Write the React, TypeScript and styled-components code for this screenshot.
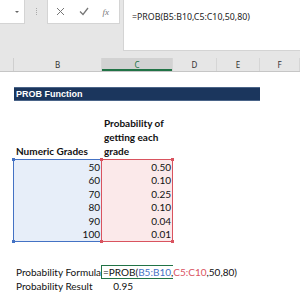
import React from "react";
import styled, { createGlobalStyle } from "styled-components";

const Global = createGlobalStyle`
  html, body { margin: 0; padding: 0; background: #fff; }
  body { width: 300px; height: 300px; overflow: hidden; }
`;

const Page = styled.div`
  width: 300px;
  height: 300px;
  overflow: hidden;
  background: #fff;
  font-family: Lato, "Liberation Sans", sans-serif;
`;

const Ribbon = styled.div`
  background: #e6e6e6;
  height: 58px;
  display: flex;
  align-items: flex-start;
`;

const NameBox = styled.div`
  width: 25px;
  height: 24px;
  background: #fff;
  border-right: 1px solid #d4d4d4;
  border-bottom: 1px solid #d4d4d4;
  box-sizing: border-box;
  display: flex;
  align-items: center;
  justify-content: flex-end;
  padding-right: 5px;
`;

const Arrow = styled.div`
  width: 0;
  height: 0;
  border-left: 2px solid transparent;
  border-right: 2px solid transparent;
  border-top: 2px solid #666;
`;

const Grip = styled.div`
  width: 22px;
  height: 24px;
  display: flex;
  align-items: center;
  justify-content: center;
  &::before {
    content: "";
    width: 1px;
    height: 8px;
    background-image: linear-gradient(#aaa 50%, transparent 50%);
    background-size: 1px 2px;
  }
`;

const FxBox = styled.div`
  width: 73px;
  height: 24px;
  background: #fff;
  border: 1px solid #d4d4d4;
  border-top: none;
  box-sizing: border-box;
  display: flex;
  align-items: center;
  justify-content: space-between;
  padding: 0 10px 0 8px;
`;

const Fx = styled.span`
  font-family: "Liberation Serif", serif;
  font-style: italic;
  font-size: 9px;
  color: #777;
`;

const FormulaBox = styled.div`
  margin-left: 3px;
  flex: 1;
  height: 51px;
  background: #fff;
  border-left: 1px solid #d4d4d4;
  border-bottom: 1px solid #d4d4d4;
  box-sizing: border-box;
  padding: 11px 0 0 8px;
  font-family: "Noto Sans", sans-serif;
  font-size: 8.8px;
  color: #222;
  white-space: nowrap;
`;

const Headers = styled.div`
  display: grid;
  grid-template-columns: 14px 88px 71px 44px 43px 40px;
  height: 13px;
  background: #e6e6e6;
  border-bottom: 1px solid #c6c6c6;
  box-sizing: content-box;
`;

const ColHead = styled.div<{ $active?: boolean; $corner?: boolean }>`
  display: flex;
  align-items: center;
  justify-content: center;
  font-family: "Noto Sans", sans-serif;
  font-size: 8px;
  color: ${(p) => (p.$active ? "#217346" : "#333")};
  background: ${(p) => (p.$active ? "#d2d2d2" : "#e6e6e6")};
  border-right: ${(p) => (p.$corner ? "1px solid #cfcfcf" : "1px solid #d6d6d6")};
  box-shadow: ${(p) => (p.$active ? "inset 0 -2px 0 #217346" : "none")};
  box-sizing: border-box;
`;

const Sheet = styled.div`
  display: grid;
  grid-template-columns: 14px 88px 71px 44px 43px 40px;
  grid-template-rows: 15px 14px 15px 43px 14px 14px 14px 14px 14px 13px 23px 14px 14px;
  font-size: 10px;
  color: #111;
`;

const Title = styled.div`
  grid-column: 2 / 6;
  grid-row: 2;
  background: #1b365d;
  border-top: 1px solid #4a6488;
  border-bottom: 1px solid #4a6488;
  box-sizing: border-box;
  color: #fff;
  font-family: "Liberation Sans", Arial, sans-serif;
  font-weight: bold;
  font-size: 9px;
  display: flex;
  align-items: center;
  padding-left: 2px;
`;

const HeadCell = styled.div<{ $col: number }>`
  grid-column: ${(p) => p.$col};
  grid-row: 4;
  font-weight: bold;
  font-size: 10px;
  line-height: 14px;
  display: flex;
  align-items: flex-end;
  padding: 0 2px 1px;
`;

const Range = styled.div<{ $col: number; $bg: string; $line: string }>`
  grid-column: ${(p) => p.$col};
  grid-row: 5 / 11;
  position: relative;
  background: ${(p) => p.$bg};
  border: 1px solid ${(p) => p.$line};
  margin-left: -1px;
  display: grid;
  grid-template-rows: repeat(6, 1fr);
  box-sizing: border-box;
`;

const Handle = styled.span<{ $c: string; $x: "l" | "r"; $y: "t" | "b" }>`
  position: absolute;
  width: 3px;
  height: 3px;
  background: ${(p) => p.$c};
  ${(p) => (p.$x === "l" ? "left: -2px;" : "right: -2px;")}
  ${(p) => (p.$y === "t" ? "top: -2px;" : "bottom: -2px;")}
`;

const Num = styled.div`
  display: flex;
  align-items: center;
  justify-content: flex-end;
  padding-right: 1px;
  font-size: 10px;
`;

const Label = styled.div<{ $row: number }>`
  grid-column: 2;
  grid-row: ${(p) => p.$row};
  display: flex;
  align-items: center;
  padding-left: 2px;
  white-space: nowrap;
  font-size: 10px;
`;

const EditCell = styled.div`
  grid-column: 3;
  grid-row: 12;
  position: relative;
  border: 1px solid #217346;
  border-right: none;
  margin-left: -1px;
  box-sizing: border-box;
  display: flex;
  align-items: center;
  padding-left: 1px;
  white-space: nowrap;
  overflow: visible;
  font-size: 10px;
  z-index: 1;
`;

const Ref = styled.span<{ $c: string }>`
  color: ${(p) => p.$c};
`;

const Caret = styled.span`
  display: inline-block;
  width: 1px;
  height: 11px;
  background: #000;
  margin-left: 1px;
`;

const Result = styled.div`
  grid-column: 3;
  grid-row: 13;
  display: flex;
  align-items: center;
  justify-content: flex-end;
  padding-right: 40px;
  font-size: 10px;
`;

const grades = [50, 60, 70, 80, 90, 100];
const probs = ["0.50", "0.10", "0.25", "0.10", "0.04", "0.01"];

export default function App() {
  return (
    <Page>
      <Global />
      <Ribbon>
        <NameBox>
          <Arrow />
        </NameBox>
        <Grip />
        <FxBox>
          <svg width="9" height="9" viewBox="0 0 9 9">
            <path d="M1 1L8 8M8 1L1 8" stroke="#777" strokeWidth="1" fill="none" />
          </svg>
          <svg width="10" height="9" viewBox="0 0 10 9">
            <path d="M1 4.5L4 7.5L9 1" stroke="#777" strokeWidth="1.3" fill="none" />
          </svg>
          <Fx>fx</Fx>
        </FxBox>
        <FormulaBox>=PROB(B5:B10,C5:C10,50,80)</FormulaBox>
      </Ribbon>
      <Headers>
        <ColHead $corner />
        <ColHead>B</ColHead>
        <ColHead $active>C</ColHead>
        <ColHead>D</ColHead>
        <ColHead>E</ColHead>
        <ColHead>F</ColHead>
      </Headers>
      <Sheet>
        <Title>PROB Function</Title>
        <HeadCell $col={2}>Numeric Grades</HeadCell>
        <HeadCell $col={3}>
          Probability of getting each grade
        </HeadCell>
        <Range $col={2} $bg="#e7eef9" $line="#4472c4">
          {grades.map((g) => (
            <Num key={g}>{g}</Num>
          ))}
          <Handle $c="#4472c4" $x="l" $y="t" />
          <Handle $c="#4472c4" $x="l" $y="b" />
        </Range>
        <Range $col={3} $bg="#fbe9ea" $line="#d9535f">
          {probs.map((p, i) => (
            <Num key={i}>{p}</Num>
          ))}
          <Handle $c="#d9535f" $x="l" $y="t" />
          <Handle $c="#d9535f" $x="r" $y="t" />
          <Handle $c="#d9535f" $x="l" $y="b" />
          <Handle $c="#d9535f" $x="r" $y="b" />
        </Range>
        <Label $row={12}>Probability Formula</Label>
        <EditCell>
          =PROB(<Ref $c="#4472c4">B5:B10</Ref>,<Ref $c="#d9535f">C5:C10</Ref>,50,80)
          <Caret />
        </EditCell>
        <Label $row={13}>Probability Result</Label>
        <Result>0.95</Result>
      </Sheet>
    </Page>
  );
}
